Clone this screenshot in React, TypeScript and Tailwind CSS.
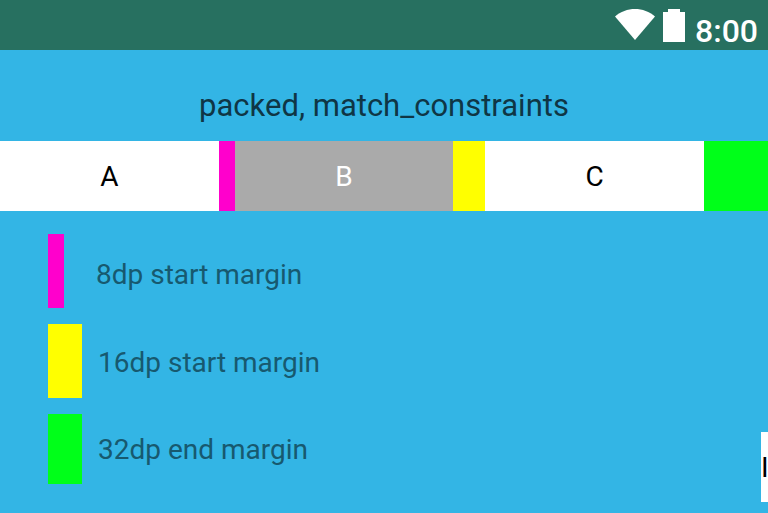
import React from "react";

interface LegendItem {
  label: string;
  swatch: string;
  text: string;
}

const legend: LegendItem[] = [
  {
    label: "8dp start margin",
    swatch: "mr-8 h-[74px] w-4 bg-[#ff00cc]",
    text: "pt-2",
  },
  {
    label: "16dp start margin",
    swatch: "mr-4 h-[74px] w-[34px] bg-[#ffff00]",
    text: "pt-1",
  },
  {
    label: "32dp end margin",
    swatch: "mr-4 h-[70px] w-[34px] bg-[#00ff19]",
    text: "pt-0.5",
  },
];

const StatusBar = () => {
  return (
    <header className="flex h-[50px] items-start justify-end bg-[#277060] pr-2.5 text-white">
      <svg className="mt-2 mr-2 h-8 w-10" viewBox="0 0 40 32" fill="currentColor">
        <path d="M0 8.5C11-1.5 29-1.5 40 8.5L20 32Z" />
      </svg>
      <svg className="mt-2 mr-2.5 h-[34px] w-[22px]" viewBox="0 0 22 34" fill="currentColor">
        <path d="M5 1h12v3h5v30H0V4h5Z" />
      </svg>
      <span className="mt-3 text-[32px] leading-[38px] font-medium">8:00</span>
    </header>
  );
};

const Chain = () => {
  return (
    <div className="flex h-[70px] text-[28px] text-black">
      <div className="flex flex-1 items-center justify-center bg-white pt-0.5">A</div>
      <div className="w-4 bg-[#ff00cc]" />
      <div className="flex flex-1 items-center justify-center bg-[#aaaaaa] pt-0.5 text-white">
        B
      </div>
      <div className="w-8 bg-[#ffff00]" />
      <div className="flex flex-1 items-center justify-center bg-white pt-0.5">C</div>
      <div className="w-16 bg-[#00ff19]" />
    </div>
  );
};

const App = () => {
  return (
    <div className="min-h-screen overflow-hidden bg-[#33b5e5] font-[Roboto,sans-serif]">
      <StatusBar />
      <main>
        <h1 className="pt-9 pb-[15px] text-center text-[31px] leading-10 text-[#0f3645]">
          packed, match_constraints
        </h1>
        <Chain />
        <div className="flex items-end justify-between pt-[23px] pl-12">
          <ul className="flex flex-col gap-4">
            {legend.map((item) => (
              <li
                key={item.label}
                className="flex items-center text-[28px] leading-8 text-[#17596f]"
              >
                <span className={item.swatch} />
                <span className={item.text}>{item.label}</span>
              </li>
            ))}
          </ul>
          <div className="-mb-[18px] flex h-[70px] w-[7px] items-center overflow-hidden bg-white pt-0.5 text-[28px] text-black">
            I
          </div>
        </div>
      </main>
    </div>
  );
};

export default App;
